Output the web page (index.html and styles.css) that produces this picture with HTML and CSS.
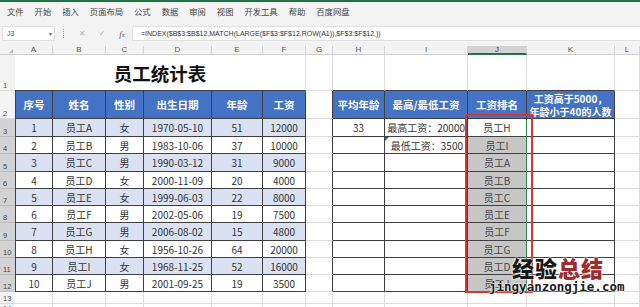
FILE: index.html
```html
<!DOCTYPE html>
<html lang="zh-CN">
<head>
    <meta charset="UTF-8">
    <title>员工统计表</title>
    <link rel="stylesheet" href="styles.css">
</head>
<body>
<div class="app">
    <div class="tabs">
        <span>文件</span><span>开始</span><span>插入</span><span>页面布局</span><span>公式</span><span>数据</span><span>审阅</span><span>视图</span><span>开发工具</span><span>帮助</span><span>百度网盘</span>
    </div>
    <div class="fbar">
        <div class="namebox"><span>J3</span><span class="caret">&#9662;</span></div>
        <div class="sep"><i></i></div>
        <span class="ficon">&#10005;</span>
        <span class="ficon">&#10003;</span>
        <span class="ficon fx"><i>f</i><small>x</small></span>
        <div class="formula">=INDEX($B$3:$B$12,MATCH(LARGE($F$3:$F$12,ROW(A1)),$F$3:$F$12,))</div>
    </div>

    <div class="sheet">
        <!-- column headers -->
        <div class="ch corner"></div>
        <div class="ch">A</div><div class="ch">B</div><div class="ch">C</div><div class="ch">D</div><div class="ch">E</div><div class="ch">F</div>
        <div class="ch">G</div><div class="ch">H</div><div class="ch">I</div><div class="ch on">J</div><div class="ch">K</div><div class="ch">L</div>

        <!-- row 1 -->
        <div class="rh">1</div>
        <div class="title">员工统计表</div>
        <div class="c"></div>
        <div class="c tb"></div><div class="c tb"></div><div class="c tb"></div><div class="c tb"></div>
        <div class="c"></div>

        <!-- row 2 -->
        <div class="rh">2</div>
        <div class="hd dl">序号</div><div class="hd">姓名</div><div class="hd">性别</div><div class="hd">出生日期</div><div class="hd">年龄</div><div class="hd">工资</div>
        <div class="c dr"></div>
        <div class="hd">平均年龄</div><div class="hd">最高/最低工资</div><div class="hd">工资排名</div>
        <div class="hd two"><span>工资高于5000，</span><span>年龄小于40的人数</span></div>
        <div class="c"></div>

        <!-- row 3 -->
        <div class="rh on">3</div>
        <div class="d dl b">1</div><div class="d b">员工A</div><div class="d b">女</div><div class="d b">1970-05-10</div><div class="d b">51</div><div class="d b">12000</div>
        <div class="c dr"></div>
        <div class="d">33</div><div class="d ir">最高工资：20000</div><div class="d">员工H</div><div class="d"></div>
        <div class="c"></div>

        <!-- row 4 -->
        <div class="rh on">4</div>
        <div class="d dl">2</div><div class="d">员工B</div><div class="d">男</div><div class="d">1983-10-06</div><div class="d">37</div><div class="d">10000</div>
        <div class="c dr"></div>
        <div class="d"></div><div class="d ir flag">最低工资：3500</div><div class="d sel">员工I</div><div class="d"></div>
        <div class="c"></div>

        <!-- row 5 -->
        <div class="rh on">5</div>
        <div class="d dl b">3</div><div class="d b">员工C</div><div class="d b">男</div><div class="d b">1990-03-12</div><div class="d b">31</div><div class="d b">9000</div>
        <div class="c dr"></div>
        <div class="d"></div><div class="d"></div><div class="d sel">员工A</div><div class="d"></div>
        <div class="c"></div>

        <!-- row 6 -->
        <div class="rh on">6</div>
        <div class="d dl">4</div><div class="d">员工D</div><div class="d">女</div><div class="d">2000-11-09</div><div class="d">20</div><div class="d">4000</div>
        <div class="c dr"></div>
        <div class="d"></div><div class="d"></div><div class="d sel">员工B</div><div class="d"></div>
        <div class="c"></div>

        <!-- row 7 -->
        <div class="rh on">7</div>
        <div class="d dl b">5</div><div class="d b">员工E</div><div class="d b">女</div><div class="d b">1999-06-03</div><div class="d b">22</div><div class="d b">8000</div>
        <div class="c dr"></div>
        <div class="d"></div><div class="d"></div><div class="d sel">员工C</div><div class="d"></div>
        <div class="c"></div>

        <!-- row 8 -->
        <div class="rh on">8</div>
        <div class="d dl">6</div><div class="d">员工F</div><div class="d">男</div><div class="d">2002-05-06</div><div class="d">19</div><div class="d">7500</div>
        <div class="c dr"></div>
        <div class="d"></div><div class="d"></div><div class="d sel">员工E</div><div class="d"></div>
        <div class="c"></div>

        <!-- row 9 -->
        <div class="rh on">9</div>
        <div class="d dl b">7</div><div class="d b">员工G</div><div class="d b">男</div><div class="d b">2006-08-02</div><div class="d b">15</div><div class="d b">4800</div>
        <div class="c dr"></div>
        <div class="d"></div><div class="d"></div><div class="d sel">员工F</div><div class="d"></div>
        <div class="c"></div>

        <!-- row 10 -->
        <div class="rh on">10</div>
        <div class="d dl">8</div><div class="d">员工H</div><div class="d">女</div><div class="d">1956-10-26</div><div class="d">64</div><div class="d">20000</div>
        <div class="c dr"></div>
        <div class="d"></div><div class="d"></div><div class="d sel">员工G</div><div class="d"></div>
        <div class="c"></div>

        <!-- row 11 -->
        <div class="rh on">11</div>
        <div class="d dl b">9</div><div class="d b">员工I</div><div class="d b">女</div><div class="d b">1968-11-25</div><div class="d b">52</div><div class="d b">16000</div>
        <div class="c dr"></div>
        <div class="d"></div><div class="d"></div><div class="d sel">员工D</div><div class="d"></div>
        <div class="c"></div>

        <!-- row 12 -->
        <div class="rh on">12</div>
        <div class="d dl">10</div><div class="d">员工J</div><div class="d">男</div><div class="d">2001-09-25</div><div class="d">19</div><div class="d">3500</div>
        <div class="c dr"></div>
        <div class="d"></div><div class="d"></div><div class="d sel">员工J</div><div class="d"></div>
        <div class="c"></div>

        <!-- row 13 -->
        <div class="rh">13</div>
        <div class="c"></div><div class="c"></div><div class="c"></div><div class="c"></div><div class="c"></div><div class="c"></div>
        <div class="c"></div><div class="c"></div><div class="c"></div><div class="c"></div><div class="c"></div><div class="c"></div>

        <!-- row 14 -->
        <div class="rh top">14</div>
        <div class="c"></div><div class="c"></div><div class="c"></div><div class="c"></div><div class="c"></div><div class="c"></div>
        <div class="c"></div><div class="c"></div><div class="c"></div><div class="c"></div><div class="c"></div><div class="c"></div>

        <div class="selline"></div>
        <div class="mark"></div>
    </div>

    <div class="wm-cn">经验<em>总结</em></div>
    <div class="wm-url">jingyanzongjie.com</div>
</div>
</body>
</html>
```

FILE: styles.css
```css
* {
    box-sizing: border-box;
}
body {
    margin: 0;
    font-family: "Noto Sans CJK SC", "Noto Sans", sans-serif;
    color: #262626;
    background: #fff;
}
.app {
    position: relative;
    width: 640px;
    height: 307px;
    overflow: hidden;
}

/* ribbon tabs */
.tabs {
    height: 20px;
    border-top: 2px solid #217346;
    background: #f3f3f3;
    display: flex;
    align-items: center;
    gap: 11px;
    padding-left: 7px;
    font-size: 8.3px;
    color: #444;
}

/* formula bar */
.fbar {
    height: 26px;
    background: #f3f3f3;
    display: flex;
    align-items: center;
    padding-left: 2px;
    padding-top: 1px;
}
.namebox {
    width: 53px;
    height: 15px;
    background: #fff;
    border: 1px solid #e0e0e0;
    display: flex;
    align-items: center;
    justify-content: space-between;
    padding: 0 2px 0 4px;
    font-family: "Liberation Sans", sans-serif;
    font-size: 7px;
    color: #555;
}
.caret {
    font-size: 6px;
    color: #666;
}
.sep {
    width: 17px;
    display: flex;
    justify-content: center;
}
.sep i {
    width: 1px;
    height: 9px;
    border-left: 1px dotted #aaa;
}
.ficon {
    width: 20px;
    text-align: center;
    font-family: "DejaVu Sans", sans-serif;
    font-size: 8px;
    color: #b5b5b5;
}
.fx {
    color: #666;
    font-family: "Liberation Serif", serif;
    font-size: 9px;
}
.fx small {
    font-size: 6px;
}
.formula {
    flex: 1;
    height: 15px;
    background: #fff;
    border: 1px solid #e0e0e0;
    border-right: none;
    padding-left: 8px;
    display: flex;
    align-items: center;
    font-family: "Liberation Sans", sans-serif;
    font-size: 7px;
    color: #333;
    white-space: nowrap;
}

/* worksheet grid */
.sheet {
    position: relative;
    display: grid;
    grid-template-columns: 15px 38px 53px 38px 68px 51px 43px 27px 52px 83px 59px 88px 25px;
    grid-template-rows: 9px 36px 28px 18px 17px 18px 17px 17px 17px 18px 17px 17px 17px 12px 20px;
    font-size: 10px;
}
.ch {
    background: #f3f3f3;
    border-right: 1px solid #d4d4d4;
    border-bottom: 1px solid #cfcfcf;
    font-family: "Liberation Sans", sans-serif;
    font-size: 8px;
    color: #555;
    display: flex;
    align-items: center;
    justify-content: center;
    line-height: 1;
}
.ch.on {
    background: #d3d3d3;
    border-bottom: 2px solid #217346;
    color: #333;
}
.corner {
    position: relative;
    border-right: none;
}
.corner::after {
    content: "";
    position: absolute;
    right: 2px;
    bottom: 1px;
    border-left: 4px solid transparent;
    border-bottom: 4px solid #b9b9b9;
}
.rh {
    background: #f3f3f3;
    border-bottom: 1px solid #dadada;
    font-family: "Liberation Sans", sans-serif;
    font-size: 7.5px;
    color: #555;
    display: flex;
    align-items: flex-end;
    padding: 0 0 1px 3px;
    line-height: 1;
}
.rh.on {
    background: #d3d3d3;
    border-bottom-color: #bdbdbd;
    color: #444;
}
.rh.top {
    align-items: flex-start;
    padding-top: 1px;
}
.c {
    border-right: 1px solid #dcdcdc;
    border-bottom: 1px solid #dcdcdc;
}
.title {
    grid-column: span 6;
    border-right: 1px solid #dcdcdc;
    border-bottom: 1px solid #3f3f3f;
    display: flex;
    align-items: center;
    justify-content: center;
    font-size: 18.5px;
    font-weight: 700;
    color: #111;
}
.tb {
    border-bottom-color: #3f3f3f;
}
.dr {
    border-right-color: #3f3f3f;
}
.hd, .d {
    border-right: 1px solid #3f3f3f;
    border-bottom: 1px solid #3f3f3f;
    display: flex;
    align-items: center;
    justify-content: center;
    white-space: nowrap;
}
.hd {
    background: #4472c4;
    color: #fff;
    font-weight: 700;
    font-size: 10.5px;
}
.hd.two {
    flex-direction: column;
    font-size: 10px;
    line-height: 13px;
}
.dl {
    border-left: 1px solid #3f3f3f;
}
.d {
    color: #333;
}
.b {
    background: #d9e1f2;
}
.ir {
    justify-content: flex-end;
    padding-right: 2px;
}
.flag {
    position: relative;
    padding-right: 4px;
}
.flag::before {
    content: "";
    position: absolute;
    left: 0;
    top: 0;
    border-top: 4px solid #1e7a3c;
    border-right: 4px solid transparent;
}
.sel {
    background: #c6c6c6;
    color: #444;
}

/* selection edge and red annotation box */
.selline {
    position: absolute;
    left: 526px;
    top: 73px;
    width: 1px;
    height: 173px;
    background: #2e8b4e;
}
.mark {
    position: absolute;
    left: 465px;
    top: 68px;
    width: 68px;
    height: 179px;
    border: 2px solid #d4372d;
}

/* watermark */
.wm-cn {
    position: absolute;
    left: 512px;
    top: 255px;
    font-size: 22px;
    font-weight: 900;
    letter-spacing: 1px;
    color: #161616;
    line-height: 1.1;
    text-shadow: 0 0 2px #fff, 0 0 2px #fff, 0 0 1px #fff;
}
.wm-cn em {
    font-style: normal;
    color: #a12a2a;
}
.wm-url {
    position: absolute;
    left: 489px;
    top: 280px;
    font-family: "DejaVu Sans Mono", monospace;
    font-size: 12.5px;
    font-weight: 700;
    color: #1c1c1c;
    line-height: 1.1;
    text-shadow: 0 0 2px #fff, 0 0 2px #fff, 0 0 1px #fff;
}
```
